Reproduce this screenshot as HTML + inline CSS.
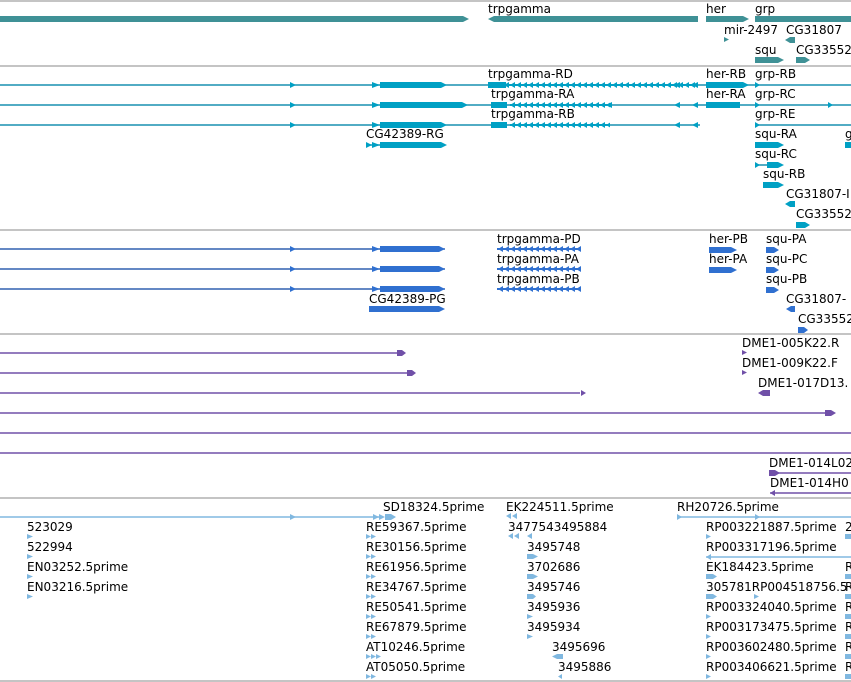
<!DOCTYPE html>
<html><head><meta charset="utf-8"><style>
html,body{margin:0;padding:0;background:#fff;width:851px;height:682px;overflow:hidden}
svg{display:block}
text{font-family:"DejaVu Sans","Liberation Sans",sans-serif;font-size:12px;fill:#000}
</style></head><body>
<svg width="851" height="682" viewBox="0 0 851 682" xmlns="http://www.w3.org/2000/svg">
<defs>
<pattern id="la" x="0" y="0" width="6" height="6" patternUnits="userSpaceOnUse"><polygon points="0,3 5,0 5,6" fill="#00a0c4"/><rect x="0" y="2" width="6" height="2" fill="#00a0c4"/></pattern>
<pattern id="lb" x="0" y="0" width="6" height="6" patternUnits="userSpaceOnUse"><polygon points="0,3 5,0 5,6" fill="#3070d0"/><rect x="0" y="2" width="6" height="2" fill="#3070d0"/></pattern>
</defs>
<g fill="none" stroke="#c4c4c4" stroke-width="2">
<line x1="0" y1="1" x2="851" y2="1"/><line x1="0" y1="66" x2="851" y2="66"/><line x1="0" y1="230" x2="851" y2="230"/><line x1="0" y1="334" x2="851" y2="334"/><line x1="0" y1="498" x2="851" y2="498"/><line x1="0" y1="681" x2="851" y2="681"/>
</g>
<!-- track1 -->
<g fill="#3f9196">
<polygon points="0,16 463,16 469,19 463,22 0,22"/>
<polygon points="488,19 494,16 698,16 698,22 494,22"/>
<polygon points="706,16 743,16 749,19 743,22 706,22"/>
<rect x="755" y="16" width="96" height="6"/>
<polygon points="724,37 729,39.5 724,42"/>
<polygon points="785,40 790,37 795,37 795,43 790,43"/>
<polygon points="755,57 778,57 784,60 778,63 755,63"/>
<polygon points="796,57 805,57 810,60 805,63 796,63"/>
</g>
<text x="488" y="13">trpgamma</text><text x="706" y="13">her</text><text x="755" y="13">grp</text>
<text x="724" y="34">mir-2497</text><text x="786" y="34">CG31807</text>
<text x="755" y="54">squ</text><text x="796" y="54">CG33552</text>
<!-- track2 -->
<g stroke="#1890b0" stroke-width="1.5"><line x1="0" y1="85" x2="851" y2="85"/><line x1="0" y1="105" x2="851" y2="105"/><line x1="0" y1="125" x2="700" y2="125"/><line x1="755" y1="125" x2="851" y2="125"/><line x1="366" y1="145" x2="380" y2="145"/><line x1="755" y1="165" x2="770" y2="165"/></g>
<g fill="#00a0c4">
<polygon points="290,82 296,85 290,88"/><polygon points="290,102 296,105 290,108"/><polygon points="290,122 296,125 290,128"/>
<polygon points="372,82 380,85 372,88"/><polygon points="372,102 380,105 372,108"/><polygon points="372,122 380,125 372,128"/>
<polygon points="380,82 441,82 447,85 441,88 380,88"/><polygon points="380,102 462,102 468,105 462,108 380,108"/><polygon points="380,122 441,122 447,125 441,128 380,128"/>
<polygon points="366,142 372,145 366,148"/><polygon points="372,142 380,145 372,148"/><polygon points="380,142 441,142 447,145 441,148 380,148"/>
<polygon points="612,102 606,105 612,108"/><polygon points="680,82 674,85 680,88"/><polygon points="698,82 692,85 698,88"/><polygon points="680,102 674,105 680,108"/><polygon points="698,102 692,105 698,108"/><polygon points="680,122 674,125 680,128"/><polygon points="698,122 692,125 698,128"/>
<polygon points="706,82 743,82 749,85 743,88 706,88"/><polygon points="706,102 740,102 740,108 706,108"/>
<polygon points="755,82 760,85 755,88"/><polygon points="755,102 760,105 755,108"/><polygon points="755,122 760,125 755,128"/>
<polygon points="828,102 833,105 828,108"/>
<polygon points="755,142 778,142 784,145 778,148 755,148"/><rect x="845" y="142" width="6" height="6"/>
<polygon points="755,162 760,165 755,168"/><polygon points="767,162 778,162 784,165 778,168 767,168"/>
<polygon points="763,182 778,182 784,185 778,188 763,188"/>
<polygon points="785,204 790,201 795,201 795,207 790,207"/>
<polygon points="796,222 805,222 810,225 805,228 796,228"/>
</g>
<rect x="488" y="0" width="18" height="6" fill="#00a0c4" transform="translate(0,82)"/>
<rect x="506" y="0" width="192" height="6" fill="url(#la)" transform="translate(0,82)"/>
<rect x="491" y="0" width="16" height="6" fill="#00a0c4" transform="translate(0,102)"/>
<rect x="510" y="0" width="100" height="6" fill="url(#la)" transform="translate(0,102)"/>
<rect x="491" y="0" width="16" height="6" fill="#00a0c4" transform="translate(0,122)"/>
<rect x="510" y="0" width="100" height="6" fill="url(#la)" transform="translate(0,122)"/>
<text x="488" y="78">trpgamma-RD</text><text x="491" y="98">trpgamma-RA</text><text x="491" y="118">trpgamma-RB</text>
<text x="366" y="138">CG42389-RG</text>
<text x="706" y="78">her-RB</text><text x="706" y="98">her-RA</text>
<text x="755" y="78">grp-RB</text><text x="755" y="98">grp-RC</text><text x="755" y="118">grp-RE</text>
<text x="755" y="138">squ-RA</text><text x="845" y="138">g</text><text x="755" y="158">squ-RC</text><text x="763" y="178">squ-RB</text>
<text x="786" y="198">CG31807-I</text><text x="796" y="218">CG33552</text>
<!-- track3 -->
<g stroke="#3060b0" stroke-width="1.5"><line x1="0" y1="249" x2="445" y2="249"/><line x1="0" y1="269" x2="445" y2="269"/><line x1="0" y1="289" x2="445" y2="289"/></g>
<g fill="#3070d0">
<polygon points="290,246 296,249 290,252"/><polygon points="290,266 296,269 290,272"/><polygon points="290,286 296,289 290,292"/>
<polygon points="372,246 380,249 372,252"/><polygon points="372,266 380,269 372,272"/><polygon points="372,286 380,289 372,292"/>
<polygon points="380,246 439,246 445,249 439,252 380,252"/><polygon points="380,266 439,266 445,269 439,272 380,272"/><polygon points="380,286 439,286 445,289 439,292 380,292"/>
<polygon points="369,306 439,306 445,309 439,312 369,312"/>
<polygon points="709,247 731,247 737,250 731,253 709,253"/><polygon points="709,267 731,267 737,270 731,273 709,273"/>
<polygon points="766,247 774,247 779,250 774,253 766,253"/><polygon points="766,267 774,267 779,270 774,273 766,273"/><polygon points="766,287 774,287 779,290 774,293 766,293"/>
<polygon points="786,309 791,306 795,306 795,312 791,312"/>
<polygon points="798,327 804,327 808,330 804,333 798,333"/>
</g>
<rect x="497" y="0" width="84" height="6" fill="url(#lb)" transform="translate(0,246)"/>
<rect x="497" y="0" width="84" height="6" fill="url(#lb)" transform="translate(0,266)"/>
<rect x="497" y="0" width="84" height="6" fill="url(#lb)" transform="translate(0,286)"/>
<text x="497" y="243">trpgamma-PD</text><text x="497" y="263">trpgamma-PA</text><text x="497" y="283">trpgamma-PB</text>
<text x="369" y="303">CG42389-PG</text>
<text x="709" y="243">her-PB</text><text x="709" y="263">her-PA</text>
<text x="766" y="243">squ-PA</text><text x="766" y="263">squ-PC</text><text x="766" y="283">squ-PB</text>
<text x="786" y="303">CG31807-</text><text x="798" y="323">CG33552</text>
<!-- track4 -->
<g stroke="#7050a8" stroke-width="1.5"><line x1="0" y1="353" x2="400" y2="353"/><line x1="0" y1="373" x2="410" y2="373"/><line x1="0" y1="393" x2="580" y2="393"/><line x1="0" y1="413" x2="830" y2="413"/><line x1="0" y1="433" x2="851" y2="433"/><line x1="0" y1="453" x2="851" y2="453"/><line x1="769" y1="473" x2="851" y2="473"/><line x1="770" y1="493" x2="851" y2="493"/></g>
<g fill="#7050a8">
<polygon points="397,350 402,350 406,353 402,356 397,356"/><polygon points="407,370 412,370 416,373 412,376 407,376"/><polygon points="581,390 586,393 581,396"/><polygon points="825,410 831,410 836,413 831,416 825,416"/>
<polygon points="742,350 747,352.5 742,355"/><polygon points="742,370 747,372.5 742,375"/>
<polygon points="758,393 763,390 770,390 770,396 763,396"/>
<polygon points="769,470 775,470 780,473 775,476 769,476"/><polygon points="770,493 775,490 775,496"/>
</g>
<text x="742" y="347">DME1-005K22.R</text><text x="742" y="367">DME1-009K22.F</text><text x="758" y="387">DME1-017D13.</text>
<text x="769" y="467">DME1-014L02</text><text x="770" y="487">DME1-014H0</text>
<!-- track5 -->
<g stroke="#80b8e0" stroke-width="1.5"><line x1="0" y1="517" x2="380" y2="517"/><line x1="677" y1="517" x2="851" y2="517"/><line x1="706" y1="557" x2="851" y2="557"/></g>
<g fill="#80b8e0">
<polygon points="290,514 296,517 290,520"/>
<polygon points="373,514 379,517 373,520"/><polygon points="379,514 385,517 379,520"/><rect x="385" y="514" width="6" height="6"/><polygon points="391,514 396,517 391,520"/>
<polygon points="506,516 511,513 511,519"/><polygon points="512,516 517,513 517,519"/>
<polygon points="508,536 513,533 513,539"/><polygon points="514,536 519,533 519,539"/><polygon points="527,536 532,533 532,539"/>
<polygon points="677,514 682,517 677,520"/><polygon points="755,514 760,517 755,520"/>
</g>
<g fill="#80b8e0">
<polygon points="27,534 33,536.5 27,539"/><polygon points="27,554 33,556.5 27,559"/><polygon points="27,574 33,576.5 27,579"/><polygon points="27,594 33,596.5 27,599"/>
<polygon points="366,534 371,536.5 366,539"/><polygon points="371,534 376,536.5 371,539"/>
<polygon points="366,554 371,556.5 366,559"/><polygon points="371,554 376,556.5 371,559"/>
<polygon points="366,574 371,576.5 366,579"/><polygon points="371,574 376,576.5 371,579"/>
<polygon points="366,594 371,596.5 366,599"/><polygon points="371,594 376,596.5 371,599"/>
<polygon points="366,614 371,616.5 366,619"/><polygon points="371,614 376,616.5 371,619"/>
<polygon points="366,634 371,636.5 366,639"/><polygon points="371,634 376,636.5 371,639"/>
<polygon points="366,654 371,656.5 366,659"/><polygon points="371,654 376,656.5 371,659"/><polygon points="376,654 381,656.5 376,659"/>
<polygon points="366,674 371,676.5 366,679"/><polygon points="371,674 376,676.5 371,679"/>
<polygon points="527,554 533,554 538,556.5 533,559 527,559"/><polygon points="527,574 533,574 538,576.5 533,579 527,579"/><polygon points="527,594 533,594 536,596.5 533,599 527,599"/><polygon points="527,614 533,616.5 527,619"/><polygon points="527,634 533,636.5 527,639"/>
<polygon points="552,656.5 557,654 563,654 563,659 557,659"/><polygon points="558,676.5 562,674 562,679"/>
<polygon points="706,534 711,536.5 706,539"/><polygon points="706,557 711,554 711,560"/>
<polygon points="706,574 713,574 717,576.5 713,579 706,579"/><polygon points="706,594 713,594 717,596.5 713,599 706,599"/><polygon points="754,594 759,596.5 754,599"/>
<polygon points="706,614 711,616.5 706,619"/><polygon points="706,634 711,636.5 706,639"/><polygon points="706,654 711,656.5 706,659"/><polygon points="706,674 711,676.5 706,679"/>
<rect x="845" y="534" width="6" height="5"/><rect x="845" y="574" width="6" height="5"/><rect x="845" y="594" width="6" height="5"/><rect x="845" y="614" width="6" height="5"/><rect x="845" y="634" width="6" height="5"/><rect x="845" y="654" width="6" height="5"/><rect x="845" y="674" width="6" height="5"/>
</g>
<text x="383" y="511">SD18324.5prime</text><text x="506" y="511">EK224511.5prime</text><text x="677" y="511">RH20726.5prime</text>
<text x="27" y="531">523029</text><text x="27" y="551">522994</text><text x="27" y="571">EN03252.5prime</text><text x="27" y="591">EN03216.5prime</text>
<text x="366" y="531">RE59367.5prime</text><text x="366" y="551">RE30156.5prime</text><text x="366" y="571">RE61956.5prime</text><text x="366" y="591">RE34767.5prime</text><text x="366" y="611">RE50541.5prime</text><text x="366" y="631">RE67879.5prime</text><text x="366" y="651">AT10246.5prime</text><text x="366" y="671">AT05050.5prime</text>
<text x="508" y="531">3477543495884</text><text x="527" y="551">3495748</text><text x="527" y="571">3702686</text><text x="527" y="591">3495746</text><text x="527" y="611">3495936</text><text x="527" y="631">3495934</text><text x="552" y="651">3495696</text><text x="558" y="671">3495886</text>
<text x="706" y="531">RP003221887.5prime</text><text x="845" y="531">2</text>
<text x="706" y="551">RP003317196.5prime</text><text x="706" y="571">EK184423.5prime</text><text x="845" y="571">R</text>
<text x="706" y="591">305781RP004518756.5</text><text x="845" y="591">R</text>
<text x="706" y="611">RP003324040.5prime</text><text x="845" y="611">R</text>
<text x="706" y="631">RP003173475.5prime</text><text x="845" y="631">R</text>
<text x="706" y="651">RP003602480.5prime</text><text x="845" y="651">R</text>
<text x="706" y="671">RP003406621.5prime</text><text x="845" y="671">R</text>
</svg>
</body></html>
